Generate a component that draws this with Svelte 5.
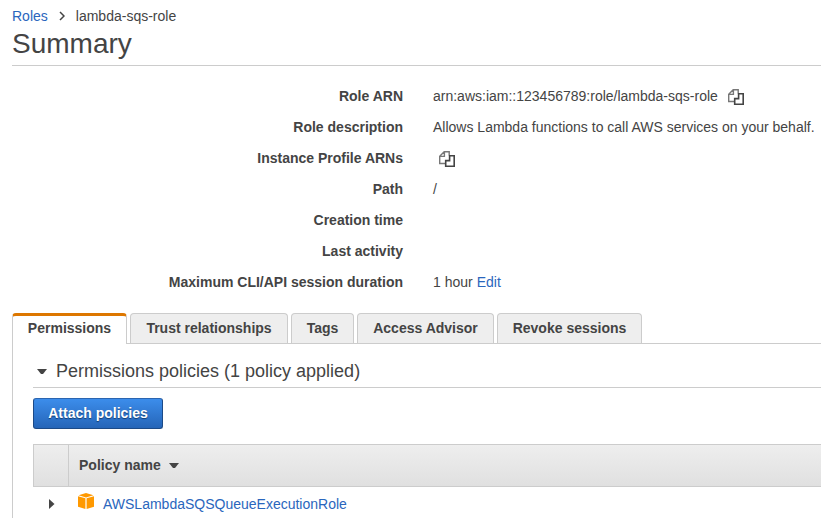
<script>
  const details = [
    { label: 'Role ARN', value: 'arn:aws:iam::123456789:role/lambda-sqs-role', copy: true },
    { label: 'Role description', value: 'Allows Lambda functions to call AWS services on your behalf.' },
    { label: 'Instance Profile ARNs', value: '', copy: true },
    { label: 'Path', value: '/' },
    { label: 'Creation time', value: '' },
    { label: 'Last activity', value: '' },
    { label: 'Maximum CLI/API session duration', value: '1 hour', edit: true }
  ];
  const tabs = [
    { name: 'Permissions', width: 115 },
    { name: 'Trust relationships', width: 158 },
    { name: 'Tags', width: 63 },
    { name: 'Access Advisor', width: 137 },
    { name: 'Revoke sessions', width: 145 }
  ];
</script>

{#snippet copyIcon()}
  <svg class="copy" width="16" height="16" viewBox="0 0 16 16" fill="none">
    <path d="M6 12.5H.7V5.2L5.2.7H10.2V4.5M5.4 1V5.4H1" stroke="#777" stroke-width="1.4" />
    <path d="M10.6 4.7H15.2V15.2H6.7V9.6H10.6Z" fill="#fff" stroke="#444" stroke-width="1.6" />
  </svg>
{/snippet}

<main>
  <nav class="crumbs">
    <a href="#roles">Roles</a>
    <svg width="6" height="10" viewBox="0 0 6 10"><path d="M1 1L5 5L1 9" fill="none" stroke="#444" stroke-width="1.5" /></svg>
    <span>lambda-sqs-role</span>
  </nav>
  <h1>Summary</h1>

  <dl>
    {#each details as item}
      <div class="detail">
        <dt>{item.label}</dt>
        <dd class:icon-only={!item.value}>
          {#if item.value}<span>{item.value}</span>{/if}
          {#if item.copy}{@render copyIcon()}{/if}
          {#if item.edit}<a class="edit" href="#edit">Edit</a>{/if}
        </dd>
      </div>
    {/each}
  </dl>

  <div class="tabs">
    {#each tabs as tab, i}
      <div class="tab" class:active={i === 0} style="width: {tab.width}px">{tab.name}</div>
    {/each}
  </div>

  <section>
    <h2>
      <svg width="10" height="6" viewBox="0 0 10 6"><path d="M0 0H10L6 5H4Z" fill="#444" /></svg>
      <span>Permissions policies (1 policy applied)</span>
    </h2>
    <button>Attach policies</button>
    <div class="table">
      <div class="head">
        <div class="expand"></div>
        <div class="name">
          <span>Policy name</span>
          <svg width="10" height="6" viewBox="0 0 10 6"><path d="M0 0H10L6 5H4Z" fill="#444" /></svg>
        </div>
      </div>
      <div class="row">
        <svg class="arrow" width="6" height="10" viewBox="0 0 6 10"><path d="M0 0V10L5.5 5Z" fill="#444" /></svg>
        <svg class="box" width="16" height="16" viewBox="0 0 16 16">
          <path d="M.6 2.3L8 0L15.4 2.3L8 4.4Z" fill="#f90" />
          <path d="M0 3.2L7.4 5.3V16L0 13.7Z" fill="#f90" />
          <path d="M16 3.2L8.6 5.3V16L16 13.7Z" fill="#f90" />
        </svg>
        <a href="#policy">AWSLambdaSQSQueueExecutionRole</a>
      </div>
    </div>
  </section>
</main>

<style>
  :global(body) { background: #fff; overflow: hidden; }
  main {
    box-sizing: border-box;
    width: 821px;
    height: 518px;
    overflow: hidden;
    padding: 7px 0 0 12px;
    font: 14px/18px "Liberation Sans", Arial, sans-serif;
    color: #444;
  }
  a { color: #2a66bd; text-decoration: none; }
  svg { display: block; flex: none; }
  .crumbs { display: flex; align-items: center; height: 18px; }
  .crumbs svg { margin: 0 11px; }
  h1 {
    margin: 0;
    height: 40px;
    font-size: 28px;
    line-height: 37px;
    font-weight: 400;
    border-bottom: 1px solid #ccc;
  }
  dl { margin: 14px 0 0; }
  .detail { display: flex; align-items: center; height: 31px; }
  dt { width: 391px; text-align: right; font-weight: 700; }
  dd { display: flex; align-items: center; margin: 0 0 0 30px; white-space: nowrap; }
  .copy { margin: 2px 0 0 10px; }
  .icon-only .copy { margin-left: 6px; }
  .edit { margin-left: 4px; }
  .tabs {
    display: flex;
    gap: 3px;
    height: 30px;
    margin-top: 16px;
    position: relative;
  }
  .tab {
    box-sizing: border-box;
    height: 30px;
    border: 1px solid #ccc;
    border-bottom: 0;
    border-radius: 4px 4px 0 0;
    background: #eee;
    font-weight: 700;
    line-height: 29px;
    text-align: center;
    white-space: nowrap;
  }
  .tab.active {
    height: 31px;
    border-top: 3px solid #dd7700;
    line-height: 25px;
    background: #fff;
  }
  section {
    border: 1px solid #ccc;
    border-right: 0;
    border-bottom: 0;
    padding-left: 20px;
    height: 180px;
  }
  h2 {
    display: flex;
    align-items: center;
    height: 43px;
    margin: 0;
    padding: 0 0 0 4px;
    border-bottom: 1px solid #ccc;
    font-size: 18px;
    line-height: 22px;
    font-weight: 400;
  }
  h2 svg { margin: 13px 9px 0 0; }
  h2 span { margin-top: 11px; }
  button {
    display: block;
    box-sizing: border-box;
    width: 130px;
    height: 31px;
    margin: 10px 0 15px;
    padding: 0 0 1px;
    border: 1px solid #1c4a87;
    border-top-color: #2b65b0;
    border-radius: 3px;
    background: linear-gradient(#3c8deb, #2565b8);
    color: #fff;
    font: bold 14px/28px "Liberation Sans", Arial, sans-serif;
    text-shadow: 0 1px 1px #123c70;
  }
  .head {
    box-sizing: border-box;
    display: flex;
    height: 43px;
    border: 1px solid #ccc;
    border-right: 0;
    background: linear-gradient(#eee, #e0e0e0);
    font-weight: 700;
  }
  .expand { width: 34px; border-right: 1px solid #ccc; }
  .name { display: flex; align-items: center; padding: 0 0 1px 10px; }
  .name svg { margin: 2px 0 0 8px; }
  .row { display: flex; align-items: center; height: 34px; padding-left: 16px; }
  .arrow { margin-right: 23px; }
  .box { margin: -6px 9px 0 0; }
</style>
